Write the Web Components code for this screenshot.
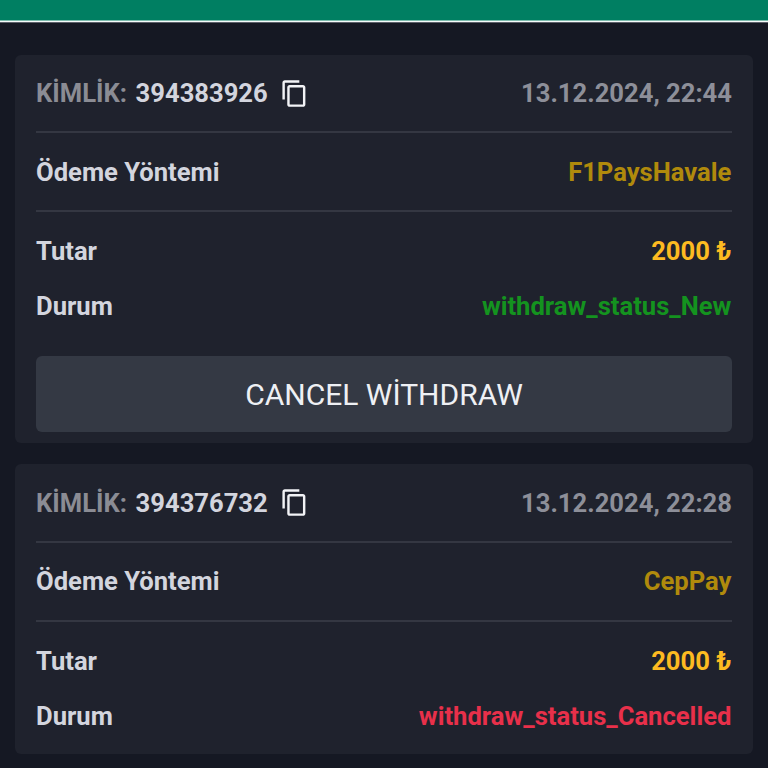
<!doctype html>
<html><head><meta charset="utf-8">
<style>
html,body{margin:0;padding:0;height:768px;overflow:hidden;background:#151823;font-family:Roboto,"Liberation Sans",sans-serif}
</style></head><body>
<top-bar></top-bar>
<main-list>
<withdraw-card id-num="394383926" date="13.12.2024, 22:44" method="F1PaysHavale" amount="2000 ₺" status="withdraw_status_New" kind="new" cancel></withdraw-card>
<withdraw-card id-num="394376732" date="13.12.2024, 22:28" method="CepPay" amount="2000 ₺" status="withdraw_status_Cancelled" kind="cancelled"></withdraw-card>
</main-list>
<script>
function def(name, html){
  customElements.define(name, class extends HTMLElement{
    connectedCallback(){
      if(this.shadowRoot) return;
      const r=this.attachShadow({mode:'open'});
      r.innerHTML=typeof html==='function'?html(this):html;
    }
  });
}
def('top-bar',`<style>:host{display:block;height:23px;background:linear-gradient(#007f62 0 20px,#7dbdaf 20px 21px,#f6fbfa 21px 22px,#5d616b 22px 23px)}</style>`);
def('main-list',`<style>:host{display:flex;flex-direction:column;gap:21.2px;padding:32px 15px 0}</style><slot></slot>`);
def('info-row',`<style>:host{display:flex;justify-content:space-between;align-items:center;font-size:25.6px;font-weight:700;line-height:28px;color:#d3d5de}
.v{color:var(--val,#d3d5de);margin-right:.6px}</style><span><slot name="k"></slot></span><span class="v"><slot name="v"></slot></span>`);
def('copy-icon',`<style>:host{display:inline-flex;width:29px;height:29px}svg{display:block}</style><svg width="29" height="29" viewBox="0 0 24 24" fill="#f2f3f6"><path d="M16 1H4c-1.100 0-2 .9-2 2v14h2V3h12V1zm3 4H8c-1.100 0-2 .9-2 2v14c0 1.100.9 2 2 2h11c1.100 0 2-.9 2-2V7c0-1.100-.9-2-2-2zm0 16H8V7h11v14z"/></svg>`);
def('withdraw-card',h=>{
  const a=n=>h.getAttribute(n);
  const col=a('kind')==='new'?'#14931f':'#e8304a';
  const c=h.hasAttribute('cancel');
  return `<style>
:host{display:block;background:#1f222d;border-radius:6px;padding:0 21px ${c?11:24}px;font-family:Roboto,"Liberation Sans",sans-serif}
.head{display:flex;justify-content:space-between;align-items:center;height:78.4px;border-bottom:2px solid #343742;font-size:25.6px;font-weight:700;box-sizing:border-box}
.id{display:flex;align-items:center;color:#d3d5de}
.id b{font-weight:700;color:#8b8c94;margin-right:8.6px}
.id copy-icon{margin-left:12px}
.date{color:#8d8f99}
.method{display:flex;align-items:center;height:78.8px;box-sizing:border-box;border-bottom:2px solid #343742}
.method info-row{flex:1;--val:#b08a0c}
.rows{display:flex;flex-direction:column;gap:27px;padding-top:25px}
.amt{--val:#fdbb21}
.st{--val:${col}}
button{display:block;width:100%;height:76px;margin-top:36px;border:0;border-radius:6px;background:#343944;color:#eef0f4;font:400 30px Roboto,"Liberation Sans",sans-serif;padding:0}
</style>
<div class="head"><span class="id"><b>KİMLİK:</b> ${a('id-num')}<copy-icon></copy-icon></span><span class="date">${a('date')}</span></div>
<div class="method"><info-row><span slot="k">Ödeme Yöntemi</span><span slot="v">${a('method')}</span></info-row></div>
<div class="rows">
<info-row class="amt"><span slot="k">Tutar</span><span slot="v">${a('amount')}</span></info-row>
<info-row class="st"><span slot="k">Durum</span><span slot="v">${a('status')}</span></info-row>
</div>
${c?'<button>CANCEL WİTHDRAW</button>':''}`;
});
</script>
</body></html>
